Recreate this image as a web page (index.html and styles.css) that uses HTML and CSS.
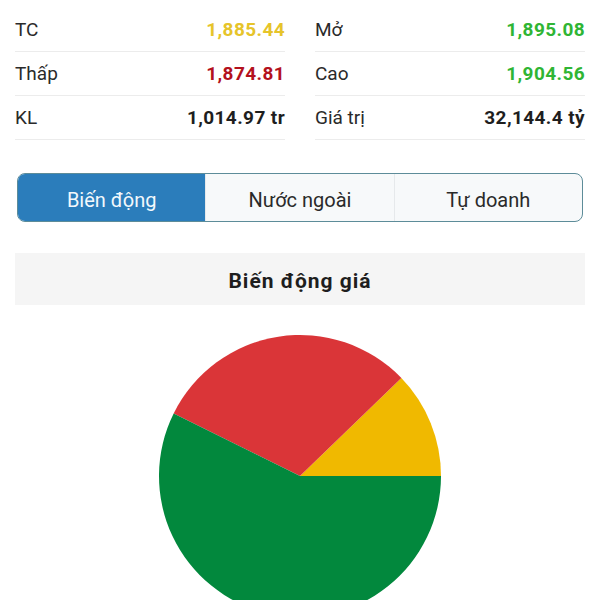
FILE: index.html
```html
<!DOCTYPE html>
<html lang="vi">
<head>
  <meta charset="UTF-8" />
  <meta name="viewport" content="width=device-width, initial-scale=1.0">
  <title>Biến động giá</title>
  <link rel="stylesheet" href="styles.css">
</head>
<body>
  <div class="page">
    <!-- Index summary -->
    <div class="stats">
      <div class="stat"><span class="label">TC</span><span class="value ref">1,885.44</span></div>
      <div class="stat"><span class="label">Mở</span><span class="value up">1,895.08</span></div>
      <div class="stat"><span class="label">Thấp</span><span class="value down">1,874.81</span></div>
      <div class="stat"><span class="label">Cao</span><span class="value up">1,904.56</span></div>
      <div class="stat"><span class="label">KL</span><span class="value">1,014.97 tr</span></div>
      <div class="stat"><span class="label">Giá trị</span><span class="value">32,144.4 tỷ</span></div>
    </div>

    <div class="tabs">
      <button class="tab active">Biến động</button>
      <button class="tab">Nước ngoài</button>
      <button class="tab">Tự doanh</button>
    </div>

    <div class="section-title">Biến động giá</div>

    <div class="chart">
      <svg class="pie" viewBox="-1 -1 2 2" width="282" height="282">
        <path d="M0 0 L1 0 A1 1 0 0 0 0.719 -0.695 Z" fill="#f0b900" />
        <path d="M0 0 L0.719 -0.695 A1 1 0 0 0 -0.896 -0.444 Z" fill="#da3538" />
        <path d="M0 0 L-0.896 -0.444 A1 1 0 1 0 1 0 Z" fill="#02883d" />
      </svg>
    </div>
  </div>
</body>
</html>
```

FILE: styles.css
```css
* {
  margin: 0;
  padding: 0;
  box-sizing: border-box;
}

body {
  font-family: Roboto, 'Noto Sans', sans-serif;
  background: #fff;
  color: #222;
}

.page {
  padding: 8px 15px 0;
}

/* Summary grid */
.stats {
  display: grid;
  grid-template-columns: 1fr 1fr;
  column-gap: 30px;
}

.stat {
  display: flex;
  justify-content: space-between;
  align-items: center;
  height: 44px;
  border-bottom: 1px solid #ececec;
  font-size: 19px;
}

.label {
  color: #2a2a2a;
}

.value {
  font-weight: 700;
  letter-spacing: 0.4px;
  color: #1e1e1e;
}

.value.ref {
  color: #e6c42a;
}

.value.down {
  color: #b3111d;
}

.value.up {
  color: #2fb534;
}

/* Tabs */
.tabs {
  display: flex;
  margin: 33px 2px 0;
  height: 49px;
  border: 1.5px solid #5d8c99;
  border-radius: 8px;
  overflow: hidden;
  background: #f7f9fa;
}

.tab {
  flex: 1;
  border: none;
  border-left: 1px solid #e6e9eb;
  background: transparent;
  padding-top: 4px;
  font-family: inherit;
  font-size: 20px;
  color: #2a2a2a;
}

.tab:first-child {
  border-left: none;
}

.tab.active {
  background: #2b7dbb;
  color: #f2f8fc;
}

/* Chart */
.section-title {
  margin-top: 31px;
  height: 52px;
  padding-top: 3px;
  display: flex;
  align-items: center;
  justify-content: center;
  background: #f5f5f5;
  font-size: 21px;
  font-weight: 700;
  letter-spacing: 1px;
  color: #1e1e1e;
}

.chart {
  display: flex;
  justify-content: center;
  padding-top: 30px;
}

.pie {
  display: block;
}
```
